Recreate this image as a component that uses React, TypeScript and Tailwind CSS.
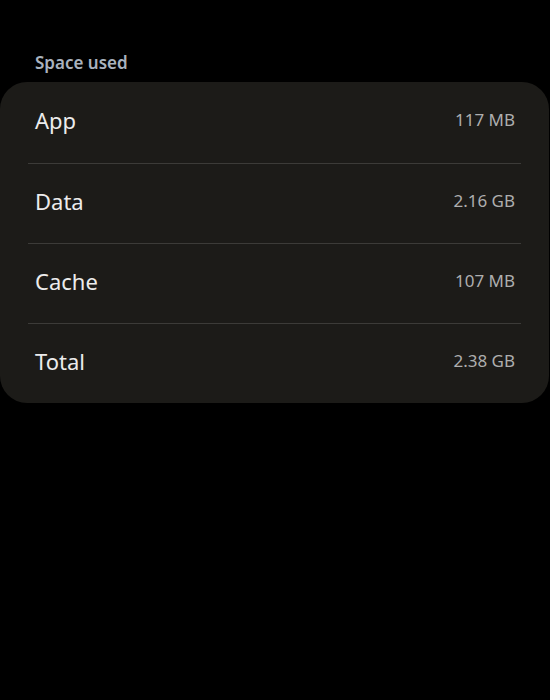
const rows = [
  { label: 'App', value: '117 MB' },
  { label: 'Data', value: '2.16 GB' },
  { label: 'Cache', value: '107 MB' },
  { label: 'Total', value: '2.38 GB' },
];

export default function App() {
  return (
    <div className="h-[700px] w-[550px] bg-black font-['Noto_Sans',sans-serif]">
      <div className="pt-[51px] pl-[35px] text-[17px] leading-[24px] font-semibold text-[#a9b2be]">Space used</div>
      <div className="mt-[7px] mr-[1px] rounded-[27px] bg-[#1c1b18]">
        {rows.map((r, i) => (
          <div key={r.label} className="mx-[28px]">
            {i > 0 && <div className="h-px bg-[#3c3b38]" />}
            <div className={`flex items-center justify-between pr-[6px] pl-[7px] pb-[5px] ${i === 0 ? 'h-[81px]' : 'h-[79px]'}`}>
              <span className="text-[22px] text-[#ececec]">{r.label}</span>
              <span className="text-[17px] text-[#aeaeae]">{r.value}</span>
            </div>
          </div>
        ))}
      </div>
    </div>
  );
}
